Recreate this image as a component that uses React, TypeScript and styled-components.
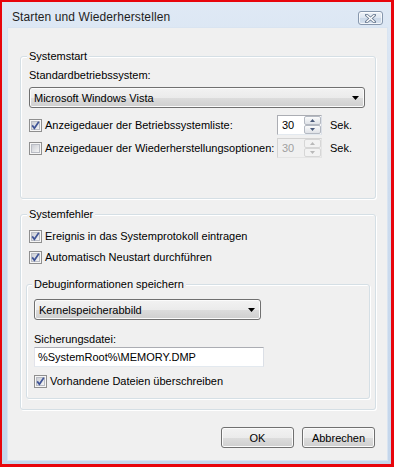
import React, { useId } from "react"
import styled, { createGlobalStyle } from "styled-components"

const GlobalStyle = createGlobalStyle`
  html, body {
    margin: 0;
    padding: 0;
    background: #ffffff;
  }
  body {
    font-family: "Liberation Sans", Arial, sans-serif;
    font-size: 11px;
    color: #000000;
  }
`

const Frame = styled.div`
  width: 394px;
  height: 467px;
  box-sizing: border-box;
  border-style: solid;
  border-color: #e8050c;
  border-width: 2px 3px 3px 2px;
  background: linear-gradient(180deg, #dfe9f5 0%, #cddcee 40%, #c4d6eb 100%);
  display: flex;
  flex-direction: column;
`

const TitleBar = styled.div`
  height: 26px;
  flex: none;
  display: flex;
  align-items: center;
  justify-content: space-between;
  padding: 0 8px 0 10px;
`

const Title = styled.span`
  font-size: 12px;
  color: #1e1e1e;
  letter-spacing: 0.1px;
  margin-top: 4px;
`

const CloseButton = styled.div`
  width: 25px;
  height: 14px;
  margin-top: 6px;
  box-sizing: border-box;
  border: 1px solid #8797ad;
  border-radius: 3px;
  background: linear-gradient(180deg, #eef3f9 0%, #dde6f1 50%, #cbd8e8 51%, #d6e1ee 100%);
  box-shadow: inset 0 0 0 1px rgba(255, 255, 255, 0.7);
  display: flex;
  align-items: center;
  justify-content: center;
`

const Client = styled.div`
  flex: 1;
  margin: 0 4px 4px 6px;
  background: #f0f0f0;
  box-shadow: 0 0 0 1px #d9e4f1;
  padding: 28px 11px 0 12px;
  display: flex;
  flex-direction: column;
`

const Group = styled.div<{ $pb: number }>`
  border: 1px solid #d5dfe5;
  border-radius: 3px;
  box-shadow: inset 1px 1px 0 #ffffff, 1px 1px 0 #ffffff;
  padding: 0 10px ${p => p.$pb}px 8px;
  display: flex;
  flex-direction: column;
  align-items: flex-start;
`

const SubGroup = styled(Group)`
  align-self: stretch;
  margin: 19px -5px 0 -3px;
  padding-left: 7px;
`

const Legend = styled.div`
  line-height: 13px;
  height: 13px;
  margin: -7px 0 0 -2px;
  padding: 0 2px;
  background: #f0f0f0;
`

const Label = styled.div<{ $mt: number }>`
  line-height: 13px;
  height: 13px;
  margin-top: ${p => p.$mt}px;
`

const Combo = styled.div<{ $w: number; $mt: number }>`
  width: ${p => p.$w}px;
  height: 21px;
  margin-top: ${p => p.$mt}px;
  box-sizing: border-box;
  border: 1px solid #707070;
  border-radius: 3px;
  background: linear-gradient(180deg, #f2f2f2 0%, #ebebeb 50%, #dddddd 51%, #cfcfcf 100%);
  box-shadow: inset 0 0 0 1px #fbfbfb;
  display: flex;
  align-items: center;
  justify-content: space-between;
  padding: 0 5px 0 4px;
`

const CheckRow = styled.label<{ $mt: number }>`
  display: flex;
  align-items: center;
  height: 16px;
  margin-top: ${p => p.$mt}px;
  gap: 3px;
`

const SpinRow = styled.div<{ $mt: number }>`
  display: flex;
  align-items: center;
  height: 20px;
  margin-top: ${p => p.$mt}px;
`

const SpinLabel = styled(CheckRow)`
  width: 248px;
  margin-top: 0;
`

const SpinBox = styled.div<{ $disabled?: boolean }>`
  width: 45px;
  height: 20px;
  box-sizing: border-box;
  border: 1px solid ${p => (p.$disabled ? "#d3d3d3" : "#abadb3")};
  border-bottom-color: ${p => (p.$disabled ? "#e4e4e4" : "#e3e9ef")};
  border-right-color: ${p => (p.$disabled ? "#e4e4e4" : "#dbdfe6")};
  background: ${p => (p.$disabled ? "#f0f0f0" : "#ffffff")};
  color: ${p => (p.$disabled ? "#a0a0a0" : "#000000")};
  display: flex;
  align-items: center;
`

const SpinValue = styled.span`
  flex: 1;
  padding-left: 4px;
`

const SpinButtons = styled.div`
  width: 17px;
  height: 18px;
  display: flex;
  flex-direction: column;
`

const SpinHalf = styled.div<{ $disabled?: boolean }>`
  flex: 1;
  box-sizing: border-box;
  border: 1px solid ${p => (p.$disabled ? "#d6d6d6" : "#b4b9c2")};
  border-radius: 2px;
  background: ${p =>
    p.$disabled
      ? "#f2f2f2"
      : "linear-gradient(180deg, #fbfbfb 0%, #eceef1 50%, #dfe2e7 100%)"};
  display: flex;
  align-items: center;
  justify-content: center;
`

const Unit = styled.span`
  margin-left: 8px;
`

const TextField = styled.div`
  width: 230px;
  height: 20px;
  margin-top: 1px;
  box-sizing: border-box;
  border: 1px solid #abadb3;
  border-color: #abadb3 #dbdfe6 #e3e9ef #e2e3ea;
  background: #ffffff;
  display: flex;
  align-items: center;
  padding-left: 3px;
`

const ButtonRow = styled.div`
  display: flex;
  justify-content: flex-end;
  gap: 8px;
  margin-top: 17px;
  padding-right: 1px;
`

const Button = styled.div`
  width: 73px;
  height: 21px;
  box-sizing: border-box;
  border: 1px solid #707070;
  border-radius: 3px;
  background: linear-gradient(180deg, #f2f2f2 0%, #ebebeb 50%, #dddddd 51%, #cfcfcf 100%);
  box-shadow: inset 0 0 0 1px #fbfbfb;
  display: flex;
  align-items: center;
  justify-content: center;
`

const Spacer = styled.div<{ $h: number }>`
  height: ${p => p.$h}px;
  flex: none;
`

function CheckBox({ checked }: { checked?: boolean }) {
  const id = useId()
  return (
    <svg width="13" height="13" viewBox="0 0 13 13" style={{ flex: "none" }}>
      <defs>
        <linearGradient id={id} x1="0" y1="0" x2="1" y2="1">
          <stop offset="0" stopColor="#c9ccd3" />
          <stop offset="1" stopColor="#f7f7f7" />
        </linearGradient>
      </defs>
      <rect x="0.5" y="0.5" width="12" height="12" fill="#f6f6f6" stroke="#8f8f8f" />
      <rect x="2.5" y="2.5" width="8" height="8" fill={`url(#${id})`} stroke="#b9bcc4" />
      {checked && (
        <path d="M3.2 6.4 L5.4 9.2 L9.8 2.8" fill="none" stroke="#3f5496" strokeWidth="1.7" />
      )}
    </svg>
  )
}

function ComboArrow() {
  return (
    <svg width="7" height="4" viewBox="0 0 7 4">
      <path d="M0 0 H7 L3.5 4 Z" fill="#000000" />
    </svg>
  )
}

function Spinner({ value, disabled }: { value: string; disabled?: boolean }) {
  const color = disabled ? "#b8b8b8" : "#4a5a7a"
  return (
    <SpinBox $disabled={disabled}>
      <SpinValue>{value}</SpinValue>
      <SpinButtons>
        <SpinHalf $disabled={disabled}>
          <svg width="5" height="3" viewBox="0 0 5 3">
            <path d="M0 3 H5 L2.5 0 Z" fill={color} />
          </svg>
        </SpinHalf>
        <SpinHalf $disabled={disabled}>
          <svg width="5" height="3" viewBox="0 0 5 3">
            <path d="M0 0 H5 L2.5 3 Z" fill={color} />
          </svg>
        </SpinHalf>
      </SpinButtons>
    </SpinBox>
  )
}

export default function App() {
  return (
    <>
      <GlobalStyle />
      <Frame>
        <TitleBar>
          <Title>Starten und Wiederherstellen</Title>
          <CloseButton>
            <svg width="11" height="9" viewBox="0 0 11 9">
              <path d="M1.5 1 L9.5 8 M9.5 1 L1.5 8" stroke="#6f7f95" strokeWidth="3" strokeLinecap="square" />
              <path d="M1.5 1 L9.5 8 M9.5 1 L1.5 8" stroke="#ffffff" strokeWidth="1.4" />
            </svg>
          </CloseButton>
        </TitleBar>
        <Client>
          <Group $pb={40}>
            <Legend>Systemstart</Legend>
            <Label $mt={6}>Standardbetriebssystem:</Label>
            <Combo $w={336} $mt={5}>
              <span>Microsoft Windows Vista</span>
              <ComboArrow />
            </Combo>
            <SpinRow $mt={7}>
              <SpinLabel $mt={0}>
                <CheckBox checked />
                <span>Anzeigedauer der Betriebssystemliste:</span>
              </SpinLabel>
              <Spinner value="30" />
              <Unit>Sek.</Unit>
            </SpinRow>
            <SpinRow $mt={3}>
              <SpinLabel $mt={0}>
                <CheckBox />
                <span>Anzeigedauer der Wiederherstellungsoptionen:</span>
              </SpinLabel>
              <Spinner value="30" disabled />
              <Unit>Sek.</Unit>
            </SpinRow>
          </Group>
          <Spacer $h={15} />
          <Group $pb={10}>
            <Legend>Systemfehler</Legend>
            <CheckRow $mt={7}>
              <CheckBox checked />
              <span>Ereignis in das Systemprotokoll eintragen</span>
            </CheckRow>
            <CheckRow $mt={5}>
              <CheckBox checked />
              <span>Automatisch Neustart durchführen</span>
            </CheckRow>
            <SubGroup $pb={9}>
              <Legend>Debuginformationen speichern</Legend>
              <Combo $w={227} $mt={8}>
                <span>Kernelspeicherabbild</span>
                <ComboArrow />
              </Combo>
              <Label $mt={13}>Sicherungsdatei:</Label>
              <TextField>%SystemRoot%\MEMORY.DMP</TextField>
              <CheckRow $mt={6}>
                <CheckBox checked />
                <span>Vorhandene Dateien überschreiben</span>
              </CheckRow>
            </SubGroup>
          </Group>
          <ButtonRow>
            <Button>OK</Button>
            <Button>Abbrechen</Button>
          </ButtonRow>
        </Client>
      </Frame>
    </>
  )
}
